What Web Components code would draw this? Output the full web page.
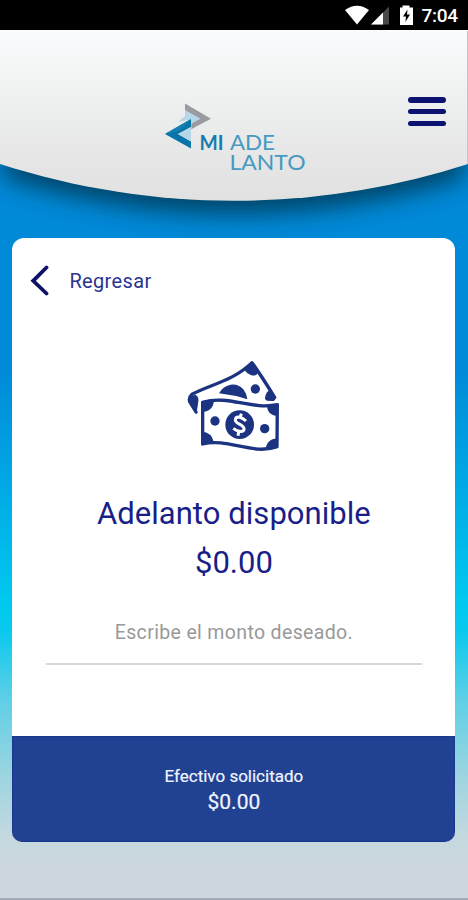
<!DOCTYPE html>
<html lang="es">
<head>
<meta charset="utf-8">
<title>Mi Adelanto</title>
<style>
html,body{margin:0;height:100%;overflow:hidden}
body{font-family:Roboto,sans-serif;color:#17208a}
</style>
</head>
<body>
<adelanto-app></adelanto-app>
<script>
function define(name, html){
  const t=document.createElement('template');
  t.innerHTML=html;
  customElements.define(name,class extends HTMLElement{
    constructor(){super();this.attachShadow({mode:'open'}).appendChild(t.content.cloneNode(true));}
  });
}

define('status-bar',`<style>
:host{display:flex;height:30px;background:#000;color:#fff;box-sizing:border-box;padding-left:344px;align-items:flex-start;position:relative;z-index:2}
svg{display:block;flex:none;width:76px;height:30px}
span{font:500 19px/22px Roboto,sans-serif;padding-top:5px;letter-spacing:-.3px;margin-left:1.500px}
</style>
<svg viewBox="344 0 76 30"><path d="M345 10Q357 1.5 369 10L357 24.500z" fill="#fff"/>
<path d="M371 24.500L389 6.500v18z" fill="#484848"/><path d="M371 24.500L383 12.500v12z" fill="#fff"/>
<path d="M400 7.500h2.500V5.500h7v2h3.500v17.500h-13z" fill="#fff"/><path d="M407.500 9.500L403 16.500h3l-.6 5.500L410 14.500h-3z" fill="#000"/></svg>
<span>7:04</span>`);

define('brand-logo',`<style>
:host{display:block;width:142px;height:80px}svg{display:block;overflow:visible}
text{font-family:Lato,sans-serif;font-size:21.500px}
</style>
<svg width="142" height="80" viewBox="164 102 142 80">
<path d="M185 109L206 119L191 130V119.500L178 122L185 116z" fill="#b8d6ea"/>
<path d="M185 103.500L211 118.700L191.500 129V123.500L200.500 118.700L185 110z" fill="#999b9e"/>
<path d="M191 119L165 134L191 148.500V141.500L178 134L191 127z" fill="#0874a8"/>
<path d="M191 119L165 134L179 131z" fill="#1480b2"/>
<path d="M191 127L178 134L191 141.500z" fill="#b5d5e8"/>
<text x="199.500" y="149.800" font-weight="700" fill="#167cae" textLength="24" lengthAdjust="spacingAndGlyphs">MI</text>
<text x="230" y="149.800" fill="#4799c1" textLength="45" lengthAdjust="spacingAndGlyphs">ADE</text>
<text x="229.500" y="170" fill="#4799c1" textLength="76" lengthAdjust="spacingAndGlyphs">LANTO</text>
</svg>`);

define('menu-button',`<style>
:host{display:flex;flex-direction:column;gap:6.200px;width:38px}
i{height:5.600px;border-radius:3px;background:#0b1270}
</style><i></i><i></i><i></i>`);

define('app-header',`<style>
:host{display:grid;height:208px;position:relative}
.bg{position:absolute;left:0;top:0;width:468px;height:208px;overflow:visible}
.row{position:relative;display:flex;align-items:flex-start;justify-content:space-between;padding:72px 22px 0 164px}
menu-button{margin-top:-5px}
</style>
<svg class="bg" viewBox="0 30 468 208">
<defs><linearGradient id="g" x1="0" y1="0" x2="0" y2="1"><stop offset="0" stop-color="#f9fbfc"/><stop offset=".35" stop-color="#f0f2f2"/><stop offset=".75" stop-color="#e6e6e6"/><stop offset="1" stop-color="#e1e1e1"/></linearGradient>
<filter id="s" x="-20%" y="-20%" width="140%" height="160%"><feGaussianBlur stdDeviation="12"/></filter></defs>
<path d="M4 30H464V165C308 213 160 213 4 165z" fill="#00304a" opacity=".78" filter="url(#s)" transform="translate(0 13)"/>
<path d="M0 30H468V164C315 213 153 213 0 164z" fill="url(#g)"/>
<path d="M467.500 31V164" stroke="#c3c7ca"/>
</svg>
<div class="row"><brand-logo></brand-logo><menu-button></menu-button></div>`);

define('back-link',`<style>
:host{display:flex;align-items:center;gap:20px;height:32px;font-size:20px;letter-spacing:.35px;color:#2a3490}
svg{display:block}
</style><svg width="19" height="32" viewBox="0 0 19 32"><path d="M16.500 2.500L3.200 15.800L16.500 28.500" fill="none" stroke="#0e1266" stroke-width="3.800" stroke-linecap="round" stroke-linejoin="miter"/></svg><slot></slot>`);

define('cash-icon',`<style>:host{display:block;width:110px;height:110px}svg{display:block}</style>
<svg width="110" height="110" viewBox="0 0 330 330" fill="none" stroke="#1b3380" stroke-width="10" stroke-linejoin="round" stroke-linecap="round">
<path d="M48 186L29 155Q25 143 36 133C91 103 158 94 216 38C240 71 263 108 284 142L279 148L262 147"/>
<g fill="#1b3380" stroke="none"><path d="M27 141L46 134Q57 140 55 153Q54 165 49 192L29 160zM193 60L216 35L237 67Q226 81 212 75Q202 72 193 60zM261 127L272 117L287 144L281 153L255 148Q254 137 261 127zM117 130Q128 109 151 104Q174 100 190 118Q200 130 202 148Q162 135 117 130z"/><circle cx="226" cy="117" r="14"/></g>
<path d="M68 157C145 134 213 180 292 164L291 290C219 317 144 263 68 282z"/>
<g fill="#1b3380" stroke="none"><path d="M65 153L102 149Q101 183 66 186zM261 169L294 164V199Q262 197 261 169zM66 245Q94 245 102 278L66 286zM293 265V293L257 300Q258 268 293 265z"/><circle cx="105" cy="213" r="14"/><circle cx="254" cy="236" r="14"/><circle cx="179" cy="224" r="43"/></g>
<path d="M198 213C187 202 169 196 166 208C162 222 196 223 192 239C188 249 170 243 160 235M184 191L181 201M176 246L174 257" stroke="#fff" stroke-width="9" stroke-linecap="butt"/>
</svg>`);

define('amount-field',`<style>
:host{display:block;box-sizing:border-box;width:376px;height:46px;border-bottom:2px solid #d6d6d9;text-align:center;font-size:19.500px;line-height:28px;letter-spacing:.35px;color:#999}
</style><slot></slot>`);

define('summary-footer',`<style>
:host{display:flex;flex-direction:column;align-items:center;height:106px;box-sizing:border-box;padding-top:28px;background:#214192;color:#f1f4ff;box-shadow:inset 0 0 2px #0b2580}
.l{font-size:17px;line-height:24px;-webkit-text-stroke:.2px}
.v{font-size:21px;line-height:28px;-webkit-text-stroke:.2px}
</style><div class="l"><slot name="label"></slot></div><div class="v"><slot></slot></div>`);

define('advance-card',`<style>
:host{display:flex;flex-direction:column;width:443px;height:604px;border-radius:12px 12px 10px 10px;background:#fff;overflow:hidden;position:relative}
.main{flex:1;display:flex;flex-direction:column;align-items:center}
back-link{align-self:flex-start;margin:27px 0 0 18px}
cash-icon{margin-top:53px;align-self:flex-start;margin-left:168px}
h1,p{margin:0;font-weight:400;font-size:31px;line-height:48px;color:#191f88}
h1{margin-top:30px;letter-spacing:.05px}
p{margin-top:1px}
amount-field{margin-top:32px}
</style>
<div class="main"><back-link>Regresar</back-link><cash-icon></cash-icon>
<h1>Adelanto disponible</h1><p>$0.00</p>
<amount-field>Escribe el monto deseado.</amount-field></div>
<summary-footer><span slot="label">Efectivo solicitado</span>$0.00</summary-footer>`);

define('adelanto-app',`<style>
:host{display:flex;flex-direction:column;width:468px;height:900px;box-sizing:border-box;border-bottom:2px solid #a0aab8;overflow:hidden;background:linear-gradient(#0088d6 0,#008ad8 370px,#00a7e4 480px,#00c8ef 600px,#08c9ee 630px,#5fcfe6 700px,#9fd5e0 780px,#c6d8df 840px,#ccd7dd 870px,#cdd6dd 900px)}
advance-card{align-self:flex-start;margin-left:12.400px}
</style>
<status-bar></status-bar><app-header></app-header><advance-card></advance-card>`);
</script>
</body>
</html>
